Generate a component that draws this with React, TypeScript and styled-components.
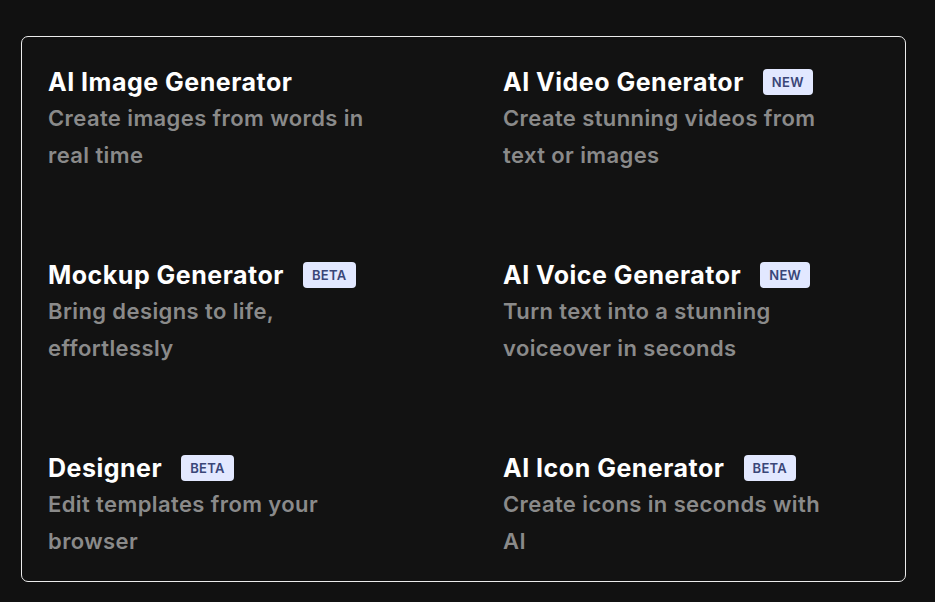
import styled, { createGlobalStyle } from 'styled-components';

interface Tool {
    title: string;
    description: string;
    badge?: 'NEW' | 'BETA';
}

const tools: Tool[] = [
    { title: 'AI Image Generator', description: 'Create images from words in real time' },
    { title: 'AI Video Generator', description: 'Create stunning videos from text or images', badge: 'NEW' },
    { title: 'Mockup Generator', description: 'Bring designs to life, effortlessly', badge: 'BETA' },
    { title: 'AI Voice Generator', description: 'Turn text into a stunning voiceover in seconds', badge: 'NEW' },
    { title: 'Designer', description: 'Edit templates from your browser', badge: 'BETA' },
    { title: 'AI Icon Generator', description: 'Create icons in seconds with AI', badge: 'BETA' },
];

const GlobalStyle = createGlobalStyle`
    html, body {
        margin: 0;
        background: #111111;
        font-family: Inter, "Noto Sans", sans-serif;
    }
`;

const Page = styled.div`
    padding: 36px 30px 0 21px;
`;

const Panel = styled.div`
    width: 885px;
    height: 546px;
    box-sizing: border-box;
    border: 1.5px solid #ececec;
    border-radius: 7px;
    background: #121212;
    padding: 27px 26px 20px;
    display: grid;
    grid-template-columns: 374px 1fr;
    column-gap: 81px;
    row-gap: 83px;
    align-content: start;
`;

const Item = styled.div`
    display: flex;
    flex-direction: column;
`;

const TitleRow = styled.div`
    display: flex;
    align-items: center;
    gap: 19px;
    height: 36px;
`;

const Title = styled.h3`
    margin: 0;
    color: #ffffff;
    font-size: 25px;
    font-weight: 700;
    letter-spacing: 0.5px;
`;

const Badge = styled.span`
    display: inline-flex;
    align-items: center;
    justify-content: center;
    height: 26px;
    padding: 0 9px;
    border-radius: 4px;
    background: #e2e8ff;
    color: #3a4678;
    font-size: 13px;
    font-weight: 600;
    letter-spacing: 0.3px;
`;

const Description = styled.p`
    margin: 0;
    max-width: 340px;
    color: #8a8a8a;
    font-size: 22px;
    font-weight: 600;
    line-height: 37px;
    letter-spacing: 0.4px;
`;

export default function App() {
    return (
        <>
            <GlobalStyle />
            <Page>
                <Panel>
                    {tools.map(tool => (
                        <Item key={tool.title}>
                            <TitleRow>
                                <Title>{tool.title}</Title>
                                {tool.badge && <Badge>{tool.badge}</Badge>}
                            </TitleRow>
                            <Description>{tool.description}</Description>
                        </Item>
                    ))}
                </Panel>
            </Page>
        </>
    );
}
